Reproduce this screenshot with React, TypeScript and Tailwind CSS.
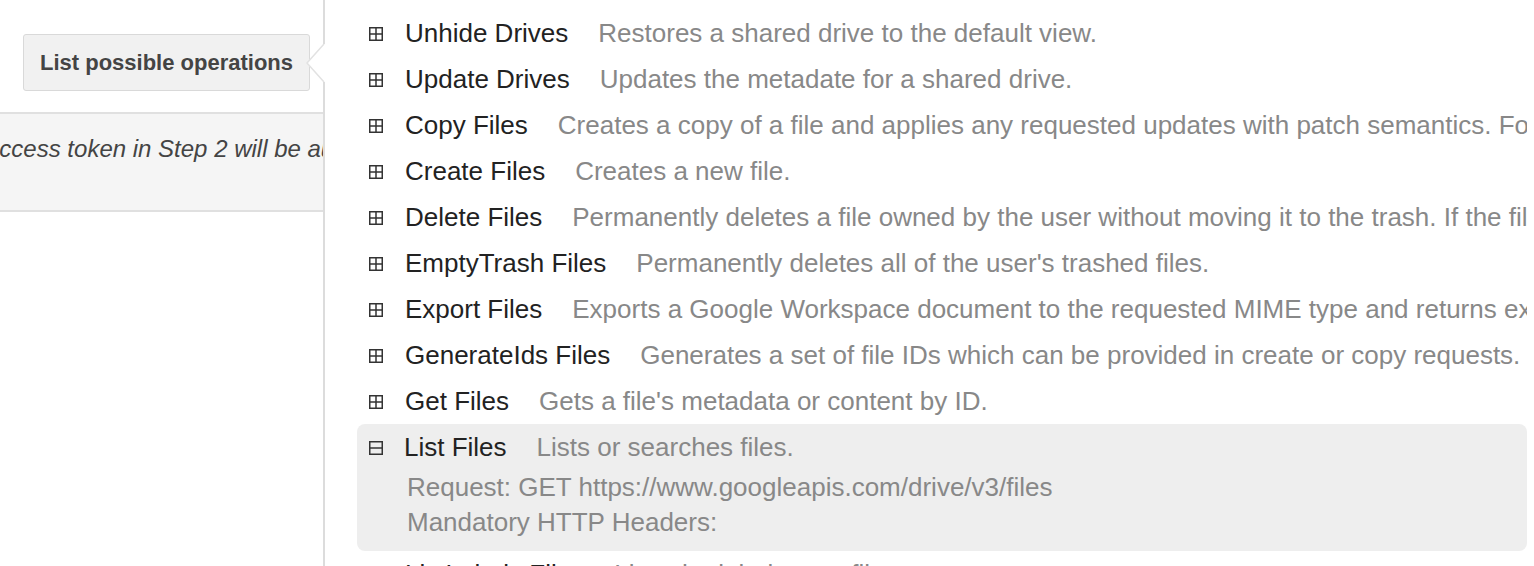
import React from "react";

const rows: { name: string; desc: string }[] = [
  { name: "Unhide Drives", desc: "Restores a shared drive to the default view." },
  { name: "Update Drives", desc: "Updates the metadate for a shared drive." },
  {
    name: "Copy Files",
    desc: "Creates a copy of a file and applies any requested updates with patch semantics. Folders cannot be copied.",
  },
  { name: "Create Files", desc: "Creates a new file." },
  {
    name: "Delete Files",
    desc: "Permanently deletes a file owned by the user without moving it to the trash. If the file belongs to a shared drive, the user must be an organizer.",
  },
  { name: "EmptyTrash Files", desc: "Permanently deletes all of the user's trashed files." },
  {
    name: "Export Files",
    desc: "Exports a Google Workspace document to the requested MIME type and returns exported byte content.",
  },
  {
    name: "GenerateIds Files",
    desc: "Generates a set of file IDs which can be provided in create or copy requests.",
  },
  { name: "Get Files", desc: "Gets a file's metadata or content by ID." },
];

function PlusBox() {
  return (
    <svg width="14" height="14" viewBox="0 0 14 14" className="shrink-0 mt-[2px]">
      <rect x="0.75" y="0.75" width="12.5" height="12.5" fill="none" stroke="#333" strokeWidth="1.5" />
      <line x1="1" y1="7" x2="13" y2="7" stroke="#333" strokeWidth="1.5" />
      <line x1="7" y1="1" x2="7" y2="13" stroke="#333" strokeWidth="1.5" />
    </svg>
  );
}

function MinusBox() {
  return (
    <svg width="14" height="14" viewBox="0 0 14 14" className="shrink-0 mt-[2px]">
      <rect x="0.75" y="0.75" width="12.5" height="12.5" fill="none" stroke="#333" strokeWidth="1.5" />
      <line x1="1" y1="7" x2="13" y2="7" stroke="#333" strokeWidth="1.5" />
    </svg>
  );
}

function Row({ name, desc, open }: { name: string; desc: string; open?: boolean }) {
  return (
    <div className="flex items-center h-[46px] px-[12px] whitespace-nowrap">
      {open ? <MinusBox /> : <PlusBox />}
      <span className={open ? "ml-[21px] text-[#222]" : "ml-[22px] text-[#222]"}>{name}</span>
      <span className="ml-[30px] text-[#888]">{desc}</span>
    </div>
  );
}

export default function App() {
  return (
    <div
      className="relative flex w-[1534px] h-[566px] overflow-hidden bg-white"
      style={{ fontFamily: '"Liberation Sans", Arial, Helvetica, sans-serif' }}
    >
      {/* Left panel */}
      <div className="w-[325px] shrink-0 border-r-2 border-[#dcdcdc] overflow-hidden">
        <div className="pt-[34px] pl-[23px]">
          <button className="w-[287px] h-[57px] bg-[#f1f1f1] border border-[#d9d9d9] rounded-[3px] text-[22px] font-bold text-[#444]">
            List possible operations
          </button>
        </div>
        <div className="mt-[21px] h-[100px] bg-[#f5f5f5] border-y-2 border-[#e0e0e0] pt-[21px] overflow-hidden">
          <div className="ml-[-14px] whitespace-nowrap italic text-[24px] leading-[28px] text-[#444]">
            access token in Step 2 will be automatically refreshed when it expires.
          </div>
        </div>
      </div>

      {/* Arrow */}
      <svg width="20" height="38" viewBox="0 0 20 38" className="absolute left-[306px] top-[44px]">
        <polygon points="18,0 1,19 18,38 20,38 20,0" fill="#fff" />
        <polyline points="18,0 1,19 18,38" fill="none" stroke="#e2e2e2" strokeWidth="1.5" />
      </svg>

      {/* Right panel */}
      <div className="flex-1 min-w-0 pl-[32px] pr-[7px] pt-[10px]">
        <div className="overflow-hidden text-[26px] leading-[46px]">
          {rows.map((r) => (
            <Row key={r.name} name={r.name} desc={r.desc} />
          ))}
          <div className="bg-[#eeeeee] rounded-[8px] pb-[11px]">
            <Row name="List Files" desc="Lists or searches files." open />
            <div className="pl-[50px] text-[#888] leading-[35px] whitespace-nowrap">
              <div>Request: GET https://www.googleapis.com/drive/v3/files</div>
              <div>Mandatory HTTP Headers:</div>
            </div>
          </div>
          <Row name="ListLabels Files" desc="Lists the labels on a file." />
        </div>
      </div>
    </div>
  );
}
